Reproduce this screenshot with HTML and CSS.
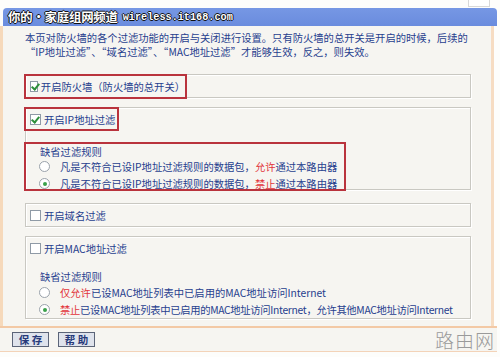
FILE: index.html
```html
<!DOCTYPE html>
<html>
<head>
    <title>防火墙设置</title>
    <link rel="stylesheet" href="styles.css">
</head>
<body>

<div class="top">
    <span class="top-box"></span>
</div>

<div class="titlebar">
    <span class="site">你的·家庭组网频道</span>
    <span class="url">wireless.it168.com</span>
</div>

<div class="panel">
    <p class="intro">本页对防火墙的各个过滤功能的开启与关闭进行设置。只有防火墙的总开关是开启的时候，后续的<br>“IP地址过滤”、“域名过滤”、“MAC地址过滤”才能够生效，反之，则失效。</p>

    <div class="box box-small">
        <div class="row head mark">
            <span class="check on"></span>开启防火墙（防火墙的总开关）
        </div>
    </div>

    <div class="box box-big">
        <div class="row head mark">
            <span class="check on"></span>开启IP地址过滤
        </div>
        <div class="rules mark">
            <div class="row rule-title">缺省过滤规则</div>
            <div class="row"><span class="radio"></span>凡是不符合已设IP地址过滤规则的数据包，<em>允许</em>通过本路由器</div>
            <div class="row"><span class="radio on"></span>凡是不符合已设IP地址过滤规则的数据包，<em>禁止</em>通过本路由器</div>
        </div>
    </div>

    <div class="box box-small box-gap">
        <div class="row head">
            <span class="check"></span>开启域名过滤
        </div>
    </div>

    <div class="box box-big">
        <div class="row head">
            <span class="check"></span>开启MAC地址过滤
        </div>
        <div class="rules plain">
            <div class="row rule-title">缺省过滤规则</div>
            <div class="row"><span class="radio"></span><em>仅允许</em>已设MAC地址列表中已启用的MAC地址访问Internet</div>
            <div class="row tight"><span class="radio on"></span><em>禁止</em>已设MAC地址列表中已启用的MAC地址访问Internet，允许其他MAC地址访问Internet</div>
        </div>
    </div>
</div>

<div class="bottom">
    <div class="buttons">
        <button>保 存</button>
        <button>帮 助</button>
    </div>
    <span class="watermark">路由网</span>
</div>

</body>
</html>
```

FILE: styles.css
```css
body {
    margin: 0;
    width: 500px;
    height: 357px;
    overflow: hidden;
    background-color: #fdfdfb;
    font-family: "Noto Sans CJK SC", "Noto Sans", sans-serif;
    font-size: 10.3px;
    color: #26408e;
}

.top {
    height: 8px;
    position: relative;
}

.top-box {
    position: absolute;
    right: 10px;
    top: 0;
    width: 20px;
    height: 6px;
    border: 1px solid #d8d8d8;
    border-top: none;
    background-color: #fff;
}

.titlebar {
    height: 18px;
    margin: 0 3px 0 3px;
    background: linear-gradient(#7697e4, #6a8cde);
    border-radius: 4px 4px 0 0;
    display: flex;
    align-items: center;
    padding-left: 5px;
    color: #fff;
    text-shadow: 1px 0 0 #111, -1px 0 0 #111, 0 1px 0 #111, 0 -1px 0 #111;
}

.site {
    font-size: 12.4px;
    font-weight: bold;
    letter-spacing: -0.2px;
}

.url {
    font-family: "Liberation Mono", monospace;
    font-size: 10.2px;
    font-weight: bold;
    margin-left: 5px;
}

.panel {
    height: 300px;
    box-sizing: border-box;
    margin-right: 6px;
    border-left: 3px solid #f6d9bb;
    border-right: 3px solid #f6dcc2;
    background-color: #f6f5f1;
    padding: 5px 20px 0 22px;
}

.intro {
    margin: 0;
    line-height: 14px;
}

.box {
    width: 446px;
    box-sizing: border-box;
    border: 1px solid #c9c8c2;
    box-shadow: inset 1px 1px 0 #fff, 1px 1px 0 #fff;
    margin-top: 9px;
}

.box-small {
    height: 24px;
}

.panel .intro + .box {
    margin-top: 15px;
}

.box-big {
    height: 83px;
}

.box-gap {
    margin-top: 13px;
}

.row {
    display: flex;
    align-items: center;
    height: 17px;
    white-space: nowrap;
}

.row.tight {
    letter-spacing: -0.3px;
}

.head {
    height: 22px;
    padding-left: 4px;
}

.mark {
    border: 2px solid #b9333d;
    margin: -1px 0 0 -2px;
    box-sizing: border-box;
}

.box-small .mark {
    width: 163px;
    height: 25px;
}

.box-big .head.mark {
    width: 95px;
    height: 24px;
}

.box-big .head {
    height: 22px;
}

.rules {
    padding: 0 0 0 13px;
}

.rules.mark {
    width: 322px;
    margin-top: 11px;
    padding-top: 0;
    height: 49px;
    margin-left: -2px;
}

.rules.plain {
    margin-top: 9px;
}

.rule-title {
    height: 14px;
    padding-left: 1px;
}

.rules.plain .rule-title {
    height: 16px;
}

em {
    font-style: normal;
    color: #e2343a;
}

.check {
    display: inline-block;
    width: 9px;
    height: 9px;
    border: 1px solid #8f9aa6;
    background-color: #fff;
    margin-right: 3px;
    position: relative;
}

.check.on::after {
    content: "";
    position: absolute;
    left: 2px;
    top: 0;
    width: 3px;
    height: 6px;
    border: solid #2d8f3a;
    border-width: 0 2px 2px 0;
    transform: rotate(40deg);
}

.radio {
    display: inline-block;
    width: 9px;
    height: 9px;
    border: 1px solid #9aa2ab;
    border-radius: 50%;
    background-color: #fff;
    margin-right: 10px;
    position: relative;
}

.radio.on::after {
    content: "";
    position: absolute;
    left: 2.5px;
    top: 2.5px;
    width: 4px;
    height: 4px;
    border-radius: 50%;
    background-color: #3aa14a;
}

.bottom {
    height: 23px;
    margin-right: 3px;
    border-top: 2px solid #f3c9a5;
    border-bottom: 1px solid #f3d3b8;
    background-color: #f6f5f1;
    display: flex;
    justify-content: space-between;
    align-items: flex-start;
    padding: 0 0 0 12px;
}

.buttons {
    display: flex;
    gap: 9px;
    padding-top: 4px;
}

button {
    width: 37px;
    height: 15px;
    padding: 0;
    border: 1px solid #5b6478;
    background-color: #dfe3ec;
    font-family: "Noto Sans CJK SC", sans-serif;
    font-size: 10.5px;
    font-weight: bold;
    color: #273a7a;
    line-height: 12px;
}

.watermark {
    font-size: 19px;
    color: #9a9a9a;
    font-weight: 300;
    line-height: 22px;
    margin-top: 1px;
    margin-right: 2px;
    letter-spacing: 1px;
}
```
